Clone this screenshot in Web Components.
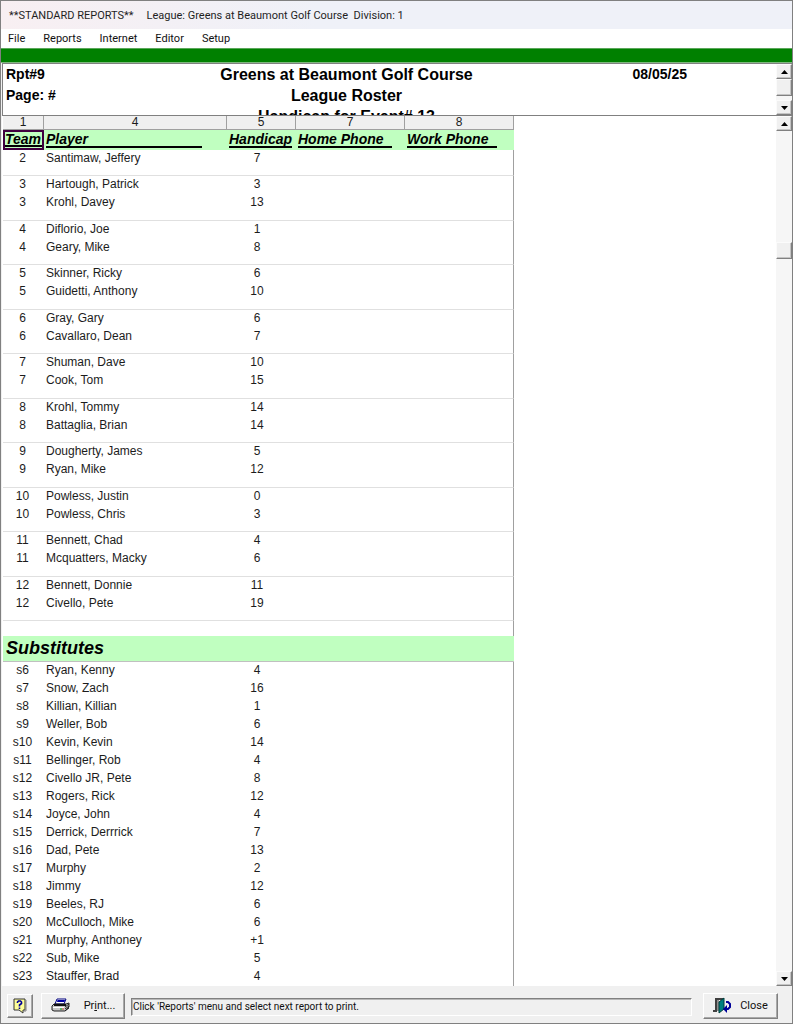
<!DOCTYPE html>
<html lang="en">
<head>
<meta charset="utf-8">
<title>Standard Reports</title>
<style>
  html, body {
    height: 100%;
    margin: 0;
  }

  body {
    color: #1c1c1c;
    font-family: 'Liberation Sans', Arial, sans-serif;
    font-size: 12px;
  }
</style>
</head>
<body>
<golf-window>
  <golf-titlebar slot="title" name="**STANDARD REPORTS**" detail="League: Greens at Beaumont Golf Course&nbsp; Division: 1"></golf-titlebar>
  <golf-menu slot="menu" items="File,Reports,Internet,Editor,Setup"></golf-menu>
  <golf-report-header slot="header" report="Rpt#9" page="Page: #" date="08/05/25">
    <div>Greens at Beaumont Golf Course</div>
    <div>League Roster</div>
    <div>Handicap for Event# 13</div>
  </golf-report-header>
  <golf-roster slot="report"></golf-roster>
  <golf-statusbar slot="status">Click 'Reports' menu and select next report to print.</golf-statusbar>
</golf-window>

<script>
class GolfWindow extends HTMLElement {
  constructor() {
    super();

    const template = document.createElement( 'template' );
    template.innerHTML = `
      <style>
        :host {
          background-color: #f0f0f0;
          border: solid 1px #808080;
          box-sizing: border-box;
          display: flex;
          flex-direction: column;
          height: 100vh;
          overflow: hidden;
        }

        .stripe {
          background-color: #008000;
          border-bottom: solid 1px #7fb87f;
          border-top: solid 1px #5aa65a;
          flex-shrink: 0;
          height: 13px;
        }

        main {
          background-color: #ffffff;
          display: flex;
          flex-basis: 0;
          flex-direction: column;
          flex-grow: 1;
          margin-left: 1px;
          min-height: 0;
        }
      </style>
      <slot name="title"></slot>
      <slot name="menu"></slot>
      <div class="stripe"></div>
      <main>
        <slot name="header"></slot>
        <slot name="report"></slot>
      </main>
      <slot name="status"></slot>
    `;

    const shadowRoot = this.attachShadow( {mode: 'open'} );
    shadowRoot.appendChild( template.content.cloneNode( true ) );
  }
}

window.customElements.define( 'golf-window', GolfWindow );

class GolfTitlebar extends HTMLElement {
  constructor() {
    super();

    const template = document.createElement( 'template' );
    template.innerHTML = `
      <style>
        :host {
          align-items: center;
          background-image: linear-gradient( to right, #f8eff2, #eff1f8 40% );
          color: #1f1f1f;
          display: flex;
          flex-shrink: 0;
          font-family: Roboto, 'Noto Sans', sans-serif;
          font-size: 11px;
          gap: 13px;
          height: 28px;
          padding: 0 8px;
          white-space: nowrap;
        }
      </style>
      <span class="name"></span>
      <span class="detail"></span>
    `;

    const shadowRoot = this.attachShadow( {mode: 'open'} );
    shadowRoot.appendChild( template.content.cloneNode( true ) );

    this.$name = shadowRoot.querySelector( '.name' );
    this.$detail = shadowRoot.querySelector( '.detail' );
  }

  connectedCallback() {
    this.$name.textContent = this.getAttribute( 'name' );
    this.$detail.textContent = this.getAttribute( 'detail' );
  }
}

window.customElements.define( 'golf-titlebar', GolfTitlebar );

class GolfMenu extends HTMLElement {
  constructor() {
    super();

    const template = document.createElement( 'template' );
    template.innerHTML = `
      <style>
        :host {
          background-color: #ffffff;
          display: block;
          flex-shrink: 0;
        }

        nav {
          align-items: center;
          display: flex;
          gap: 18px;
          height: 19px;
          padding: 0 7px;
        }

        button {
          background: none;
          border: none;
          color: #111111;
          font-family: Roboto, 'Noto Sans', sans-serif;
          font-size: 11px;
          padding: 0;
        }
      </style>
      <nav></nav>
    `;

    const shadowRoot = this.attachShadow( {mode: 'open'} );
    shadowRoot.appendChild( template.content.cloneNode( true ) );

    this.$nav = shadowRoot.querySelector( 'nav' );
  }

  connectedCallback() {
    for( const item of this.getAttribute( 'items' ).split( ',' ) ) {
      const button = document.createElement( 'button' );
      button.type = 'button';
      button.textContent = item;
      this.$nav.appendChild( button );
    }
  }
}

window.customElements.define( 'golf-menu', GolfMenu );

class GolfScrollbar extends HTMLElement {
  constructor() {
    super();

    const template = document.createElement( 'template' );
    template.innerHTML = `
      <style>
        :host {
          background-color: #f6f6f6;
          display: flex;
          flex-direction: column;
          flex-shrink: 0;
          width: 16px;
        }

        button {
          align-items: center;
          background-color: #f0f0f0;
          border: solid 1px #fbfbfb;
          border-bottom-color: #808080;
          border-right-color: #808080;
          box-shadow: inset -1px -1px #c4c4c4;
          box-sizing: border-box;
          display: flex;
          flex-shrink: 0;
          height: 15px;
          justify-content: center;
          padding: 0;
        }

        button.thumb {
          height: 17px;
        }

        .before {
          flex-grow: var( --before, 0 );
        }

        .after {
          flex-grow: var( --after, 1 );
        }
      </style>
      <button type="button" aria-label="Scroll up">
        <svg width="7" height="4" viewBox="0 0 7 4"><path d="M0 4L3.5 0L7 4Z"/></svg>
      </button>
      <div class="before"></div>
      <button class="thumb" type="button" aria-label="Scroll position"></button>
      <div class="after"></div>
      <button type="button" aria-label="Scroll down">
        <svg width="7" height="4" viewBox="0 0 7 4"><path d="M0 0L3.5 4L7 0Z"/></svg>
      </button>
    `;

    const shadowRoot = this.attachShadow( {mode: 'open'} );
    shadowRoot.appendChild( template.content.cloneNode( true ) );
  }
}

window.customElements.define( 'golf-scrollbar', GolfScrollbar );

class GolfReportHeader extends HTMLElement {
  constructor() {
    super();

    const template = document.createElement( 'template' );
    template.innerHTML = `
      <style>
        :host {
          border: solid 1px #808080;
          border-right: none;
          color: #000000;
          display: flex;
          flex-shrink: 0;
          font-weight: 700;
          height: 51px;
          overflow: hidden;
        }

        .page {
          display: grid;
          flex-grow: 1;
          font-size: 14px;
          grid-template-columns: 1fr 2fr 1fr;
          line-height: 21px;
          max-width: 681px;
          padding-left: 3px;
        }

        .title {
          font-size: 16px;
          text-align: center;
          white-space: nowrap;
        }

        .date {
          text-align: right;
        }

        golf-scrollbar {
          margin-left: auto;
        }
      </style>
      <div class="page">
        <div>
          <div class="report"></div>
          <div class="number"></div>
        </div>
        <div class="title"><slot></slot></div>
        <div class="date"></div>
      </div>
      <golf-scrollbar></golf-scrollbar>
    `;

    const shadowRoot = this.attachShadow( {mode: 'open'} );
    shadowRoot.appendChild( template.content.cloneNode( true ) );

    this.$report = shadowRoot.querySelector( '.report' );
    this.$number = shadowRoot.querySelector( '.number' );
    this.$date = shadowRoot.querySelector( '.date' );
  }

  connectedCallback() {
    this.$report.textContent = this.getAttribute( 'report' );
    this.$number.textContent = this.getAttribute( 'page' );
    this.$date.textContent = this.getAttribute( 'date' );
  }
}

window.customElements.define( 'golf-report-header', GolfReportHeader );

const TEAMS = [
  [ '2', ['Santimaw, Jeffery', '7'] ],
  [ '3', ['Hartough, Patrick', '3'], ['Krohl, Davey', '13'] ],
  [ '4', ['Diflorio, Joe', '1'], ['Geary, Mike', '8'] ],
  [ '5', ['Skinner, Ricky', '6'], ['Guidetti, Anthony', '10'] ],
  [ '6', ['Gray, Gary', '6'], ['Cavallaro, Dean', '7'] ],
  [ '7', ['Shuman, Dave', '10'], ['Cook, Tom', '15'] ],
  [ '8', ['Krohl, Tommy', '14'], ['Battaglia, Brian', '14'] ],
  [ '9', ['Dougherty, James', '5'], ['Ryan, Mike', '12'] ],
  [ '10', ['Powless, Justin', '0'], ['Powless, Chris', '3'] ],
  [ '11', ['Bennett, Chad', '4'], ['Mcquatters, Macky', '6'] ],
  [ '12', ['Bennett, Donnie', '11'], ['Civello, Pete', '19'] ]
];

const SUBSTITUTES = [
  ['s6', 'Ryan, Kenny', '4'],
  ['s7', 'Snow, Zach', '16'],
  ['s8', 'Killian, Killian', '1'],
  ['s9', 'Weller, Bob', '6'],
  ['s10', 'Kevin, Kevin', '14'],
  ['s11', 'Bellinger, Rob', '4'],
  ['s12', 'Civello JR, Pete', '8'],
  ['s13', 'Rogers, Rick', '12'],
  ['s14', 'Joyce, John', '4'],
  ['s15', 'Derrick, Derrrick', '7'],
  ['s16', 'Dad, Pete', '13'],
  ['s17', 'Murphy', '2'],
  ['s18', 'Jimmy', '12'],
  ['s19', 'Beeles, RJ', '6'],
  ['s20', 'McCulloch, Mike', '6'],
  ['s21', 'Murphy, Anthoney', '+1'],
  ['s22', 'Sub, Mike', '5'],
  ['s23', 'Stauffer, Brad', '4']
];

class GolfRoster extends HTMLElement {
  constructor() {
    super();

    const template = document.createElement( 'template' );
    template.innerHTML = `
      <style>
        :host {
          display: flex;
          flex-basis: 0;
          flex-grow: 1;
          min-height: 0;
        }

        .sheet {
          flex-basis: 0;
          flex-grow: 1;
          overflow: hidden;
          padding-left: 1px;
        }

        table {
          border-collapse: separate;
          border-spacing: 0;
          table-layout: fixed;
          width: 511px;
        }

        .team { width: 41px; }
        .player { width: 183px; }
        .handicap { width: 69px; }
        .phone { width: 109px; }

        th, td {
          box-sizing: border-box;
          height: 18px;
          line-height: 16px;
          overflow: hidden;
          padding: 0 2px;
          text-align: left;
          vertical-align: top;
          white-space: nowrap;
        }

        .numbers th {
          background-color: #f0f0f0;
          border-bottom: solid 1px #a0a0a0;
          border-right: solid 1px #a0a0a0;
          font-weight: 400;
          height: 14px;
          line-height: 13px;
          text-align: center;
        }

        .titles th {
          background-color: #c0ffc0;
          color: #000000;
          font-size: 14px;
          font-style: italic;
          height: 20px;
          padding-top: 1px;
        }

        .titles th:first-child {
          border: solid 2px #400040;
          line-height: 14px;
          padding: 0;
        }

        .titles span {
          border-bottom: solid 2px #000000;
          box-sizing: border-box;
          display: block;
          height: 17px;
        }

        .titles th:first-child span {
          height: 15px;
        }

        .titles th:nth-child( 2 ) span { width: 156px; }
        .titles th:nth-child( 3 ) span { width: 63px; }
        .titles th:nth-child( 4 ) span { width: 94px; }
        .titles th:nth-child( 5 ) span { width: 90px; }

        tbody td:last-child {
          border-right: solid 1px #a0a0a0;
        }

        tbody td:first-child,
        tbody td:nth-child( 3 ) {
          text-align: center;
        }

        tbody td:nth-child( 1 ) {
          padding-right: 4px;
        }

        tbody td:nth-child( 3 ) {
          padding-right: 11px;
        }

        .group tr:last-child td {
          border-bottom: solid 1px #e0e0e0;
          height: 26px;
        }

        .group:nth-of-type( even ) tr:last-child td {
          height: 27px;
        }

        .section td {
          border-right: solid 1px #a0a0a0;
          height: 15px;
          line-height: 15px;
        }

        .section th {
          background-color: #c0ffc0;
          border-bottom: solid 1px #c0c0c0;
          color: #000000;
          font-size: 18px;
          font-style: italic;
          height: 26px;
          line-height: 24px;
          padding-left: 3px;
        }
      </style>
      <div class="sheet">
        <table>
          <colgroup>
            <col class="team">
            <col class="player">
            <col class="handicap">
            <col class="phone">
            <col class="phone">
          </colgroup>
          <thead>
            <tr class="numbers"><th>1</th><th>4</th><th>5</th><th>7</th><th>8</th></tr>
            <tr class="titles">
              <th scope="col"><span>Team</span></th>
              <th scope="col"><span>Player</span></th>
              <th scope="col"><span>Handicap</span></th>
              <th scope="col"><span>Home Phone</span></th>
              <th scope="col"><span>Work Phone</span></th>
            </tr>
          </thead>
        </table>
      </div>
      <golf-scrollbar style="--before: 5; --after: 32"></golf-scrollbar>
    `;

    const shadowRoot = this.attachShadow( {mode: 'open'} );
    shadowRoot.appendChild( template.content.cloneNode( true ) );

    this.$table = shadowRoot.querySelector( 'table' );
  }

  connectedCallback() {
    for( const [team, ...players] of TEAMS ) {
      this.addBody( 'group', players.map( ( player ) => [team, ...player] ) );
    }

    const section = this.$table.createTBody();
    section.className = 'section';
    section.innerHTML = `
      <tr><td colspan="5"></td></tr>
      <tr><th colspan="5" scope="rowgroup">Substitutes</th></tr>
    `;

    this.addBody( 'substitutes', SUBSTITUTES );
  }

  addBody( name, rows ) {
    const body = this.$table.createTBody();
    body.className = name;

    for( const row of rows ) {
      const tr = body.insertRow();

      for( const value of [...row, '', ''] ) {
        tr.insertCell().textContent = value;
      }
    }
  }
}

window.customElements.define( 'golf-roster', GolfRoster );

class GolfButton extends HTMLElement {
  constructor() {
    super();

    const template = document.createElement( 'template' );
    template.innerHTML = `
      <style>
        :host {
          display: block;
          flex-shrink: 0;
        }

        button {
          align-items: center;
          background-color: #f0f0f0;
          border: solid 1px #ffffff;
          border-bottom-color: #808080;
          border-right-color: #808080;
          box-shadow: inset -1px -1px #a8a8a8;
          box-sizing: border-box;
          color: #111111;
          display: flex;
          font-family: Roboto, sans-serif;
          font-size: 11px;
          gap: var( --gap, 0 );
          height: 100%;
          justify-content: center;
          padding: 0;
          width: 100%;
        }
      </style>
      <button type="button"><slot name="icon"></slot><slot></slot></button>
    `;

    const shadowRoot = this.attachShadow( {mode: 'open'} );
    shadowRoot.appendChild( template.content.cloneNode( true ) );

    this.$button = shadowRoot.querySelector( 'button' );
  }

  connectedCallback() {
    if( this.hasAttribute( 'label' ) ) {
      this.$button.setAttribute( 'aria-label', this.getAttribute( 'label' ) );
    }
  }
}

window.customElements.define( 'golf-button', GolfButton );

class GolfStatusbar extends HTMLElement {
  constructor() {
    super();

    const template = document.createElement( 'template' );
    template.innerHTML = `
      <style>
        :host {
          align-items: center;
          background-color: #f0f0f0;
          box-sizing: border-box;
          color: #111111;
          display: flex;
          flex-shrink: 0;
          font-family: Roboto, sans-serif;
          font-size: 10px;
          height: 37px;
          padding: 2px 14px 0 6px;
        }

        .help {
          height: 24px;
          margin-right: 8px;
          width: 26px;
        }

        .print {
          --gap: 14px;
          height: 26px;
          margin-right: 6px;
          width: 84px;
        }

        .message {
          border: solid 1px #ffffff;
          border-left-color: #808080;
          border-top-color: #808080;
          box-shadow: inset 1px 1px #b8b8b8;
          box-sizing: border-box;
          flex-grow: 1;
          height: 18px;
          line-height: 16px;
          margin-right: 11px;
          margin-top: 2px;
          padding-left: 1px;
          white-space: nowrap;
        }

        .close {
          --gap: 8px;
          height: 26px;
          width: 75px;
        }

        svg {
          display: block;
        }
      </style>
      <golf-button class="help" label="Help">
        <svg slot="icon" width="14" height="16" viewBox="0 0 14 16">
          <path d="M1 1H12V12H10V15L6 12H1Z" fill="#ffff99" stroke="#333333"/>
          <path d="M13 2V13H11" fill="none" stroke="#808080"/>
          <path d="M4.5 5V4L5.5 3H7.500L8.500 4V5.500L6.500 7V8.500M6.500 9.500V11" fill="none" stroke="#000099" stroke-width="1.6"/>
        </svg>
      </golf-button>
      <golf-button class="print">
        <svg slot="icon" width="19" height="15" viewBox="0 0 19 15">
          <path d="M6 1H15L13 6H4Z" fill="#ffffff" stroke="#000080"/>
          <path d="M6.500 2H14L13.500 4H6Z" fill="#0000a8"/>
          <path d="M1 8L3 6H15L18 5V9L14 13H3L1 12Z" fill="#c8c8c8" stroke="#222222"/>
          <path d="M3 7H15" stroke="#111111" stroke-width="2"/>
          <path d="M14 9L18 6M14 11L18 8M14 13L18 10" fill="none" stroke="#222222"/>
          <path d="M2 9.500H13" stroke="#ffffff"/>
          <path d="M9 11H11" stroke="#00a000"/>
          <path d="M11 11H13" stroke="#d04040"/>
        </svg>
        <span>Pr<u>i</u>nt...</span>
      </golf-button>
      <div class="message" role="status"><slot></slot></div>
      <golf-button class="close">
        <svg slot="icon" width="19" height="17" viewBox="0 0 19 17">
          <path d="M0 14H3V2H10V5" fill="none" stroke="#404040" stroke-width="2"/>
          <path d="M4 3H6V14H4Z" fill="#909090"/>
          <path d="M6 5L11 1V12L6 16Z" fill="#008080" stroke="#003c3c"/>
          <path d="M13 5H15L17 7V10L15 12H12" fill="none" stroke="#000099" stroke-width="2"/>
          <path d="M14 8V16L10 12Z" fill="#000099"/>
        </svg>
        <span>Close</span>
      </golf-button>
    `;

    const shadowRoot = this.attachShadow( {mode: 'open'} );
    shadowRoot.appendChild( template.content.cloneNode( true ) );
  }
}

window.customElements.define( 'golf-statusbar', GolfStatusbar );
</script>
</body>
</html>
